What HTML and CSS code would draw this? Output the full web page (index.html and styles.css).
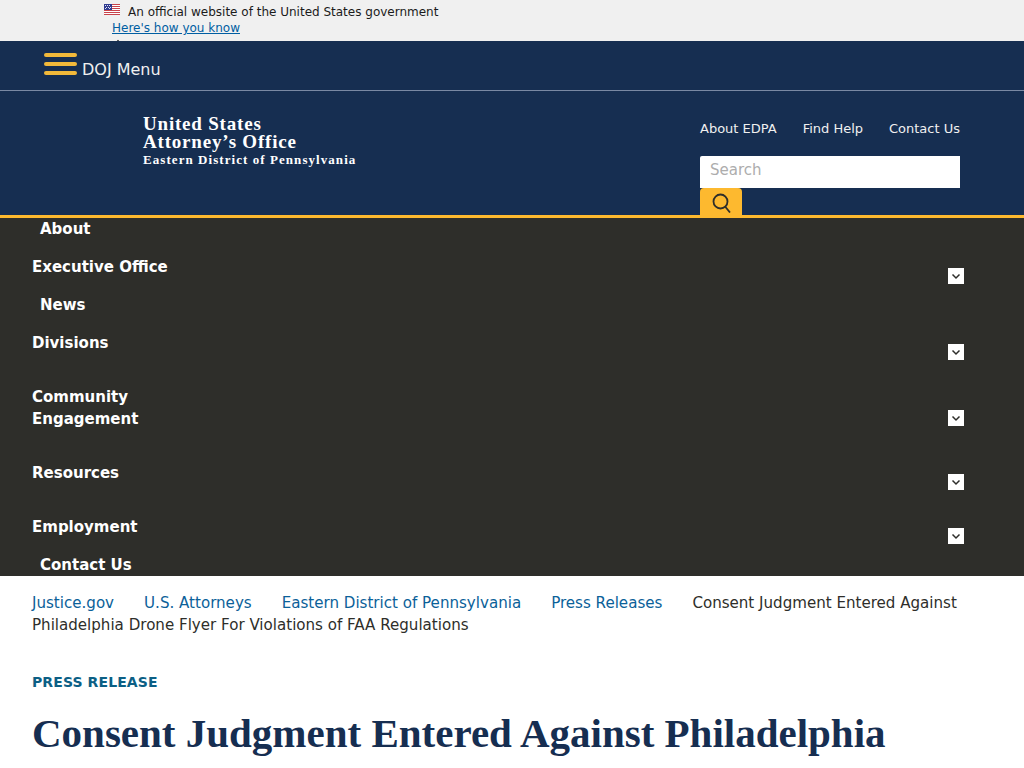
FILE: index.html
```html
<!DOCTYPE html>
<html lang="en">
<head>
<meta charset="utf-8">
<title>Consent Judgment Entered Against Philadelphia Drone Flyer</title>
<link rel="stylesheet" href="styles.css">
</head>
<body>
<section class="gov-banner">
  <div class="gov-row">
    <svg class="flag" viewBox="0 0 16 11" width="16" height="11" aria-hidden="true">
      <rect width="16" height="11" fill="#fff"/>
      <path d="M0 0h16v1H0zM0 2h16v1H0zM0 4h16v1H0zM0 6h16v1H0zM0 8h16v1H0zM0 10h16v1H0z" fill="#c8434b"/>
      <rect width="8" height="6" fill="#2f3b8f"/>
      <path d="M1 1h1v1H1zM3 1h1v1H3zM5 1h1v1H5zM2 3h1v1H2zM4 3h1v1H4zM6 3h1v1H6zM1 4h1v1H1zM5 4h1v1H5z" fill="#dfe2f2"/>
    </svg>
    <span>An official website of the United States government</span>
  </div>
  <a class="gov-link" href="#">Here's how you know</a>
  <svg class="gov-chevron" viewBox="0 0 12 8" width="12" height="8" aria-hidden="true"><path d="M2 6l4-4 4 4" fill="none" stroke="#1b1b1b" stroke-width="1.6"/></svg>
</section>
<div class="doj-bar">
  <span class="burger"><i></i><i></i><i></i></span>
  <span class="doj-label">DOJ Menu</span>
</div>
<header class="site-header">
  <a class="logo" href="#">
    <span class="logo-big">United States</span>
    <span class="logo-big">Attorney’s Office</span>
    <span class="logo-small">Eastern District of Pennsylvania</span>
  </a>
  <div class="header-right">
    <nav class="util-nav">
      <a href="#">About EDPA</a>
      <a href="#">Find Help</a>
      <a href="#">Contact Us</a>
    </nav>
    <div class="search-box">Search</div>
    <button class="search-btn" aria-label="Search">
      <svg viewBox="0 0 20 20" width="20" height="20" aria-hidden="true"><circle cx="8.5" cy="8.5" r="7" fill="none" stroke="#2e2e2a" stroke-width="1.8"/><path d="M13.300 13.800L18 19.500" fill="none" stroke="#2e2e2a" stroke-width="1.8"/></svg>
    </button>
  </div>
</header>
<nav class="main-nav">
  <ul class="nav-list">
    <li class="nav-item nav-plain">About</li>
    <li class="nav-item">Executive Office<span class="chev"><svg viewBox="0 0 16 16" width="16" height="16" aria-hidden="true"><path d="M4.500 6.500L8 10l3.500-3.500" fill="none" stroke="#2e2e2a" stroke-width="1.500"/></svg></span></li>
    <li class="nav-item nav-plain">News</li>
    <li class="nav-item nav-gap">Divisions<span class="chev"><svg viewBox="0 0 16 16" width="16" height="16" aria-hidden="true"><path d="M4.500 6.500L8 10l3.500-3.500" fill="none" stroke="#2e2e2a" stroke-width="1.500"/></svg></span></li>
    <li class="nav-item nav-gap"><span class="nav-wrap">Community Engagement</span><span class="chev chev-two"><svg viewBox="0 0 16 16" width="16" height="16" aria-hidden="true"><path d="M4.500 6.500L8 10l3.500-3.500" fill="none" stroke="#2e2e2a" stroke-width="1.500"/></svg></span></li>
    <li class="nav-item nav-gap">Resources<span class="chev"><svg viewBox="0 0 16 16" width="16" height="16" aria-hidden="true"><path d="M4.500 6.500L8 10l3.500-3.500" fill="none" stroke="#2e2e2a" stroke-width="1.500"/></svg></span></li>
    <li class="nav-item">Employment<span class="chev"><svg viewBox="0 0 16 16" width="16" height="16" aria-hidden="true"><path d="M4.500 6.500L8 10l3.500-3.500" fill="none" stroke="#2e2e2a" stroke-width="1.500"/></svg></span></li>
    <li class="nav-item nav-plain">Contact Us</li>
  </ul>
</nav>
<main class="content">
  <div class="crumbs"><a href="#">Justice.gov</a><a href="#">U.S. Attorneys</a><a href="#">Eastern District of Pennsylvania</a><a href="#">Press Releases</a><span>Consent Judgment Entered Against Philadelphia Drone Flyer For Violations of FAA Regulations</span></div>
  <p class="eyebrow">PRESS RELEASE</p>
  <h1 class="title">Consent Judgment Entered Against Philadelphia Drone Flyer For Violations of FAA Regulations</h1>
</main>
</body>
</html>
```
FILE: styles.css
```css
* { box-sizing: border-box; }
html, body { margin: 0; padding: 0; }
body { font-family: "DejaVu Sans", sans-serif; background: #fff; color: #2e2e2a; height: 768px; overflow: hidden; }

.gov-banner { height: 41px; background: #f0f0f0; overflow: hidden; padding: 4px 0 0 104px; font-size: 12px; line-height: 16px; color: #1b1b1b; }
.gov-row { display: flex; align-items: flex-start; gap: 8px; }
.flag { flex: none; }
.gov-link { display: block; margin-left: 8px; color: #005ea2; text-decoration: underline; }
.gov-chevron { display: block; margin: 3px 0 0 8px; }

.doj-bar { height: 50px; background: #162e51; border-bottom: 1px solid #7a89a3; display: flex; padding: 12px 0 0 44px; color: #f0f0f0; }
.burger { display: flex; flex-direction: column; gap: 5.500px; width: 33px; }
.burger i { display: block; height: 3.500px; border-radius: 2px; background: #f2b93a; }
.doj-label { margin: 6px 0 0 5px; font-size: 16px; line-height: 22px; }

.site-header { height: 124px; background: #162e51; display: flex; justify-content: space-between; overflow: hidden; padding: 0 64px 0 143px; }
.logo { display: flex; flex-direction: column; padding-top: 24px; color: #fff; text-decoration: none; font-family: "Liberation Serif", serif; font-weight: 700; }
.logo-big { font-size: 19px; line-height: 18px; letter-spacing: .8px; }
.logo-small { font-size: 13px; line-height: 18px; letter-spacing: 1.060px; }
.header-right { width: 260px; display: flex; flex-direction: column; }
.util-nav { display: flex; justify-content: space-between; flex: none; padding-top: 30px; font-size: 13px; line-height: 16px; }
.util-nav a { color: #f0f0f0; text-decoration: none; }
.search-box { flex: none; margin-top: 19px; height: 32px; padding-left: 10px; background: #fff; border-radius: 2px 0 0 0; color: #adadad; font-size: 15px; line-height: 28px; }
.search-btn { width: 42px; height: 32px; flex: none; border: 0; padding: 5px 0 0 1px; background: #fdb92f; border-radius: 4px 4px 0 0; display: flex; justify-content: center; align-items: flex-start; }

.main-nav { background: #2e2e2a; border-top: 3px solid #fdb92f; height: 361px; color: #fff; font-weight: 700; font-size: 15px; line-height: 22px; }
.nav-list { list-style: none; margin: 0; padding: 0 60px 0 32px; display: flex; flex-direction: column; gap: 16px; }
.nav-item { display: flex; justify-content: space-between; align-items: center; }
.nav-plain { padding-left: 8px; }
.nav-gap { margin-bottom: 16px; }
.nav-wrap { width: 120px; }
.chev { display: block; width: 16px; height: 16px; background: #fff; margin-top: 9px; margin-bottom: -9px; }
.chev-two { margin-top: 10px; margin-bottom: -10px; }
.chev svg { display: block; }

.content { padding: 16px 32px 0; }
.crumbs { font-size: 15.080px; line-height: 22px; color: #2e2e2a; }
.crumbs a { color: #0b6199; text-decoration: none; margin-right: 30px; }
.eyebrow { margin: 36px 0 0; font-size: 14px; line-height: 20px; font-weight: 700; letter-spacing: .1px; color: #0c5f85; }
.title { margin: 14px 0 0; max-width: 900px; font-family: "Liberation Serif", serif; font-weight: 700; font-size: 41px; line-height: 54px; color: #162e51; }
```
